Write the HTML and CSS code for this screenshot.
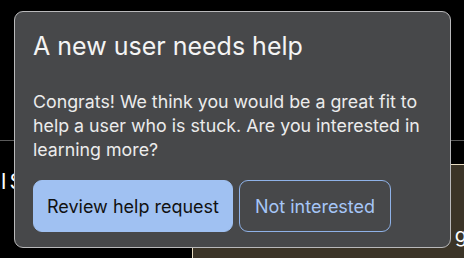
FILE: index.html
```html
<!DOCTYPE html>
<html lang="en">
<head>
<meta charset="utf-8">
<title>Help request</title>
<link rel="stylesheet" href="styles.css">
</head>
<body>
  <div class="backdrop">
    <div class="top-area"></div>
    <div class="divider"></div>
    <div class="lower">
      <div class="left-col"><span class="peek">l S</span></div>
      <div class="right-col">
        <div class="spacer"></div>
        <div class="panel"><span class="peek-g">g</span></div>
      </div>
    </div>
  </div>

  <div class="dialog" role="dialog" aria-labelledby="dlg-title">
    <h1 class="dialog-title" id="dlg-title">A new user needs help</h1>
    <p class="dialog-text">Congrats! We think you would be a great fit to help a user who is stuck. Are you interested in learning more?</p>
    <div class="actions">
      <button class="btn btn-primary">Review help request</button>
      <button class="btn btn-outline">Not interested</button>
    </div>
  </div>
</body>
</html>
```
FILE: styles.css
```css
html, body {
  margin: 0;
  padding: 0;
}
body {
  width: 464px;
  height: 258px;
  overflow: hidden;
  background: #000;
  position: relative;
  font-family: Inter, "Liberation Sans", Arial, sans-serif;
}
.backdrop {
  display: flex;
  flex-direction: column;
  height: 258px;
}
.top-area {
  height: 140px;
}
.divider {
  height: 1px;
  background: #5a5a5a;
}
.lower {
  flex: 1;
  display: flex;
}
.left-col {
  width: 192px;
  padding-top: 27px;
}
.peek {
  color: #fff;
  font-size: 22px;
  padding-left: 1px;
  word-spacing: -3px;
  white-space: nowrap;
}
.right-col {
  flex: 1;
  display: flex;
  flex-direction: column;
}
.spacer {
  height: 23px;
}
.panel {
  flex: 1;
  background: #3b3427;
  border-top: 1px solid #e8dcc0;
  border-left: 1px solid #e8dcc0;
  display: flex;
  justify-content: flex-end;
  align-items: flex-end;
}
.peek-g {
  color: #fff;
  font-size: 20px;
  line-height: 20px;
  padding-bottom: 13px;
  margin-right: -3px;
}
.dialog {
  position: absolute;
  left: 14px;
  top: 11px;
  width: 437px;
  height: 237px;
  box-sizing: border-box;
  background: #47484a;
  border: 1px solid #b9b9bb;
  border-radius: 9px;
  padding: 18px 18px 15px 18px;
  display: flex;
  flex-direction: column;
}
.dialog-title {
  margin: 0;
  font-size: 25px;
  line-height: 32px;
  font-weight: 400;
  color: #f4f4f4;
}
.dialog-text {
  margin: 28px 0 0 0;
  font-size: 17.8px;
  line-height: 24px;
  color: #ececec;
}
.actions {
  margin-top: 18px;
  display: flex;
  gap: 6px;
}
.btn {
  height: 52px;
  box-sizing: border-box;
  padding: 0;
  border-radius: 9px;
  font-family: inherit;
  font-size: 18px;
  white-space: nowrap;
  display: flex;
  align-items: center;
  justify-content: center;
  cursor: pointer;
}
.btn-primary {
  width: 200px;
  background: #a0c1f2;
  border: 1px solid #a0c1f2;
  color: #111;
}
.btn-outline {
  width: 152px;
  background: transparent;
  border: 1px solid #8fb2e8;
  color: #a6c6f7;
}
```
